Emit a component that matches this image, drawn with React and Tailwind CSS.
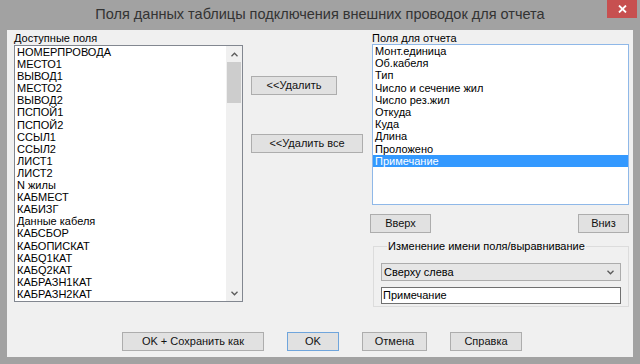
const leftItems = [
  'НОМЕРПРОВОДА', 'МЕСТО1', 'ВЫВОД1', 'МЕСТО2', 'ВЫВОД2', 'ПСПОЙ1', 'ПСПОЙ2',
  'ССЫЛ1', 'ССЫЛ2', 'ЛИСТ1', 'ЛИСТ2', 'N жилы', 'КАБМЕСТ', 'КАБИЗГ',
  'Данные кабеля', 'КАБСБОР', 'КАБОПИСКАТ', 'КАБQ1КАТ', 'КАБQ2КАТ',
  'КАБРАЗН1КАТ', 'КАБРАЗН2КАТ'
];

const rightItems = [
  'Монт.единица', 'Об.кабеля', 'Тип', 'Число и сечение жил', 'Число рез.жил',
  'Откуда', 'Куда', 'Длина', 'Проложено', 'Примечание'
];

const Chevron = ({ up }) => (
  <svg width="7" height="5" viewBox="0 0 7 5">
    <path
      d={up ? 'M0.5 4.2 L3.5 1.2 L6.5 4.2' : 'M0.5 0.8 L3.5 3.8 L6.5 0.8'}
      fill="none"
      stroke="#5a5a5a"
      strokeWidth="1.3"
    />
  </svg>
);

const Btn = ({ className, children }) => (
  <button
    className={
      'h-[19px] border bg-[#e1e1e1] text-[11px] font-normal leading-none text-[#111] flex items-center justify-center ' +
      className
    }
  >
    {children}
  </button>
);

const App = () => {
  return (
    <div className="w-[640px] h-[364px] bg-[#a2a2a2] flex flex-col font-['Liberation_Sans',Arial,sans-serif]">
      {/* title bar */}
      <div className="h-[30px] relative flex justify-center pt-[5px]">
        <span className="text-[14.5px] leading-[18px] text-[#333]">
          Поля данных таблицы подключения внешних проводок для отчета
        </span>
        <div className="absolute right-[3px] top-0 w-[30px] h-[18px] bg-[#c75050] flex items-center justify-center">
          <svg width="9" height="8" viewBox="0 0 9 8">
            <path d="M1 0.5 L8 7.5 M8 0.5 L1 7.5" stroke="#fff" strokeWidth="1.8" />
          </svg>
        </div>
      </div>

      {/* client area */}
      <div className="mx-[7px] h-[327px] bg-[#f0f0f0] flex flex-col text-[11px] text-black">
        <div className="flex pt-[2px] pl-[7px]">
          {/* available fields */}
          <div className="w-[229px] flex flex-col">
            <div className="h-[13px] leading-[12px]">Доступные поля</div>
            <div className="h-[257px] border border-[#828790] bg-white flex">
              <div className="flex-1 overflow-hidden pl-[2px]">
                {leftItems.map((item) => (
                  <div key={item} className="leading-[12.1px] h-[12.1px] whitespace-nowrap">
                    {item}
                  </div>
                ))}
              </div>
              <div className="w-[16px] bg-[#f0f0f0] flex flex-col">
                <div className="h-[16px] flex items-center justify-center">
                  <Chevron up />
                </div>
                <div className="h-[41px] mx-[1px] bg-[#cdcdcd]" />
                <div className="flex-1" />
                <div className="h-[16px] flex items-center justify-center">
                  <Chevron />
                </div>
              </div>
            </div>
          </div>

          {/* remove buttons */}
          <div className="ml-[8px] w-[112px] flex flex-col items-start">
            <Btn className="mt-[44px] w-[86px] h-[18px] border-[#adadad]">&lt;&lt;Удалить</Btn>
            <Btn className="mt-[39px] w-[112px] h-[18px] border-[#adadad]">&lt;&lt;Удалить все</Btn>
          </div>

          {/* report fields */}
          <div className="ml-[9px] w-[257px] flex flex-col">
            <div className="h-[12px] leading-[12px]">Поля для отчета</div>
            <div className="h-[161px] border border-[#8fb8e8] bg-white overflow-hidden">
              {rightItems.map((item) => (
                <div
                  key={item}
                  className={
                    item === 'Примечание'
                      ? 'h-[12.2px] leading-[12.2px] pl-[2px] bg-[#3399ff] text-white whitespace-nowrap'
                      : 'h-[12.2px] leading-[12.2px] pl-[2px] whitespace-nowrap'
                  }
                >
                  {item}
                </div>
              ))}
            </div>

            <div className="mt-[9px] flex justify-between">
              <Btn className="-ml-[2px] w-[61px] border-[#adadad]">Вверх</Btn>
              <Btn className="w-[51px] border-[#adadad]">Вниз</Btn>
            </div>

            <fieldset className="mt-[7px] ml-[1px] w-[256px] border border-[#dcdcdc] px-[7px] pb-[2px]">
              <legend className="ml-[6px] px-[1px] leading-[12px] text-[11px]">
                Изменение имени поля/выравнивание
              </legend>
              <div className="mt-[11px] h-[18px] border border-[#acacac] bg-[#e6e6e6] flex items-center justify-between pl-[2px] pr-[6px]">
                <span>Сверху слева</span>
                <Chevron />
              </div>
              <div className="mt-[6px] h-[17px] border border-[#707070] bg-white flex items-center pl-[1px]">
                Примечание
              </div>
            </fieldset>
          </div>
        </div>

        {/* bottom buttons */}
        <div className="mt-auto mb-[6px] flex pl-[115px] gap-[23px]">
          <Btn className="w-[142px] border-[#adadad]">OK + Сохранить как</Btn>
          <Btn className="w-[52px] border-[#6fa5dc]">OK</Btn>
          <Btn className="w-[65px] border-[#adadad]">Отмена</Btn>
          <Btn className="w-[72px] border-[#adadad]">Справка</Btn>
        </div>
      </div>
    </div>
  );
};

export default App;
